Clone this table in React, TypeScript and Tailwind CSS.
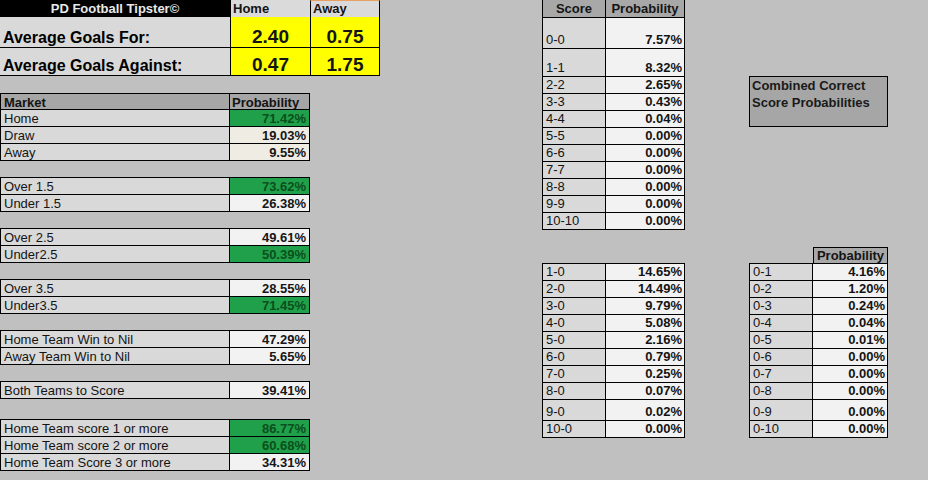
import React from "react";

type Row = { label: string; value: string; tone?: "green" | "beige" | "plain"; h?: number };

const groups: Row[][] = [
  [
    { label: "Home", value: "71.42%", tone: "green" },
    { label: "Draw", value: "19.03%", tone: "beige" },
    { label: "Away", value: "9.55%", tone: "beige" },
  ],
  [
    { label: "Over 1.5", value: "73.62%", tone: "green" },
    { label: "Under 1.5", value: "26.38%" },
  ],
  [
    { label: "Over 2.5", value: "49.61%" },
    { label: "Under2.5", value: "50.39%", tone: "green" },
  ],
  [
    { label: "Over 3.5", value: "28.55%" },
    { label: "Under3.5", value: "71.45%", tone: "green" },
  ],
  [
    { label: "Home Team Win to Nil", value: "47.29%" },
    { label: "Away Team Win to Nil", value: "5.65%" },
  ],
  [{ label: "Both Teams to Score", value: "39.41%" }],
];

const scoreGroup: Row[] = [
  { label: "Home Team score 1 or more", value: "86.77%", tone: "green" },
  { label: "Home Team score 2 or more", value: "60.68%", tone: "green" },
  { label: "Home Team Score 3 or more", value: "34.31%" },
];

const draws: Row[] = [
  { label: "0-0", value: "7.57%", h: 31 },
  { label: "1-1", value: "8.32%", h: 28 },
  { label: "2-2", value: "2.65%" },
  { label: "3-3", value: "0.43%" },
  { label: "4-4", value: "0.04%" },
  { label: "5-5", value: "0.00%" },
  { label: "6-6", value: "0.00%" },
  { label: "7-7", value: "0.00%" },
  { label: "8-8", value: "0.00%" },
  { label: "9-9", value: "0.00%" },
  { label: "10-10", value: "0.00%" },
];

const homeWins: Row[] = [
  { label: "1-0", value: "14.65%" },
  { label: "2-0", value: "14.49%" },
  { label: "3-0", value: "9.79%" },
  { label: "4-0", value: "5.08%" },
  { label: "5-0", value: "2.16%" },
  { label: "6-0", value: "0.79%" },
  { label: "7-0", value: "0.25%" },
  { label: "8-0", value: "0.07%" },
  { label: "9-0", value: "0.02%", h: 21 },
  { label: "10-0", value: "0.00%" },
];

const awayWins: Row[] = [
  { label: "0-1", value: "4.16%" },
  { label: "0-2", value: "1.20%" },
  { label: "0-3", value: "0.24%" },
  { label: "0-4", value: "0.04%" },
  { label: "0-5", value: "0.01%" },
  { label: "0-6", value: "0.00%" },
  { label: "0-7", value: "0.00%" },
  { label: "0-8", value: "0.00%" },
  { label: "0-9", value: "0.00%", h: 21 },
  { label: "0-10", value: "0.00%" },
];

function MarketGroup({ rows }: { rows: Row[] }) {
  return (
    <div className="flex flex-col border-t border-l border-black w-[310px]">
      {rows.map((r) => (
        <div key={r.label} className="flex h-[17px] border-b border-black">
          <div className="w-[229px] bg-[#d9d9d9] border-r border-black pl-[3px] leading-[18px]">{r.label}</div>
          <div
            className={`w-[80px] border-r border-black pr-[3px] text-right font-bold leading-[18px] ${
              r.tone === "green"
                ? "bg-[#20a04a] text-[#0b4f1c]"
                : r.tone === "beige"
                ? "bg-[#efece3] text-[#161616]"
                : "bg-[#f2f2f2] text-[#161616]"
            }`}
          >
            {r.value}
          </div>
        </div>
      ))}
    </div>
  );
}

function ScoreTable({ rows, valueW }: { rows: Row[]; valueW: string }) {
  return (
    <div className="flex flex-col border-t border-l border-black">
      {rows.map((r) => (
        <div
          key={r.label}
          className={`flex border-b border-black ${r.h === 31 ? "h-[31px]" : r.h === 28 ? "h-[28px]" : r.h === 21 ? "h-[21px]" : "h-[17px]"}`}
        >
          <div className="w-[63px] bg-[#d9d9d9] border-r border-black pl-[3px] flex items-end leading-[16px]">{r.label}</div>
          <div className={`${valueW} bg-[#f2f2f2] border-r border-black pr-[2px] flex items-end justify-end font-bold leading-[16px]`}>
            {r.value}
          </div>
        </div>
      ))}
    </div>
  );
}

export default function App() {
  return (
    <div className="w-[928px] h-[480px] bg-[#c0c0c0] flex text-[13px] text-[#141414] font-['Liberation_Sans',Arial,sans-serif] overflow-hidden">
      {/* left block */}
      <div className="w-[380px] flex flex-col">
        <div className="flex h-[17px]">
          <div className="w-[230px] bg-black text-[#e8e8e8] font-bold flex items-center justify-center">PD Football Tipster©</div>
          <div className="w-[80px] bg-[#dadada] border-l border-black font-bold pl-[2px] leading-[17px]">Home</div>
          <div className="w-[70px] bg-[#dadada] border-l border-r border-black border-t border-t-[#e8a060] font-bold pl-[2px] leading-[16px]">Away</div>
        </div>
        <div className="flex h-[31px] border-b border-black">
          <div className="w-[230px] bg-[#d9d9d9] pl-[3px] flex items-end text-[16px] font-bold leading-[19px] text-black">Average Goals For:</div>
          <div className="w-[80px] bg-[#ffff00] border-l border-black flex items-end justify-center text-[19px] font-bold leading-[21px]">2.40</div>
          <div className="w-[70px] bg-[#ffff00] border-l border-r border-black flex items-end justify-center text-[19px] font-bold leading-[21px]">0.75</div>
        </div>
        <div className="flex h-[28px] border-b border-black">
          <div className="w-[230px] bg-[#d9d9d9] pl-[3px] flex items-end text-[16px] font-bold leading-[19px] text-black">Average Goals Against:</div>
          <div className="w-[80px] bg-[#ffff00] border-l border-black flex items-end justify-center text-[19px] font-bold leading-[21px]">0.47</div>
          <div className="w-[70px] bg-[#ffff00] border-l border-r border-black flex items-end justify-center text-[19px] font-bold leading-[21px]">1.75</div>
        </div>

        <div className="mt-[17px] flex flex-col gap-[16px]">
          <div className="flex flex-col">
            <div className="flex h-[17px] border-t border-l border-b border-black w-[310px] bg-[#a6a6a6] font-bold">
              <div className="w-[229px] border-r border-black pl-[3px] leading-[17px]">Market</div>
              <div className="w-[80px] border-r border-black pl-[2px] leading-[17px]">Probability</div>
            </div>
            <div className="-mt-px">
              <MarketGroup rows={groups[0]} />
            </div>
          </div>
          {groups.slice(1).map((g, i) => (
            <MarketGroup key={i} rows={g} />
          ))}
          <div className="mt-[4px]">
            <MarketGroup rows={scoreGroup} />
          </div>
        </div>
      </div>

      {/* correct scores */}
      <div className="ml-[162px] w-[143px] flex flex-col">
        <div className="flex h-[17px] border-l border-black bg-[#a8a8a8] font-bold">
          <div className="w-[63px] border-r border-black flex items-center justify-center">Score</div>
          <div className="w-[79px] border-r border-black flex items-center justify-center">Probability</div>
        </div>
        <ScoreTable rows={draws} valueW="w-[79px]" />
        <div className="mt-[33px]">
          <ScoreTable rows={homeWins} valueW="w-[79px]" />
        </div>
      </div>

      {/* combined */}
      <div className="ml-[64px] w-[139px] flex flex-col">
        <div className="mt-[76px] h-[51px] border border-black bg-[#a6a6a6] font-bold pl-[2px] leading-[17px] text-[#1a1a1a]">
          <div>Combined Correct</div>
          <div>Score Probabilities</div>
        </div>
        <div className="mt-[120px] ml-[64px] w-[75px] h-[16px] border-t border-l border-r border-black bg-[#a8a8a8] font-bold flex items-center justify-center">
          Probability
        </div>
        <ScoreTable rows={awayWins} valueW="w-[75px]" />
      </div>
    </div>
  );
}
